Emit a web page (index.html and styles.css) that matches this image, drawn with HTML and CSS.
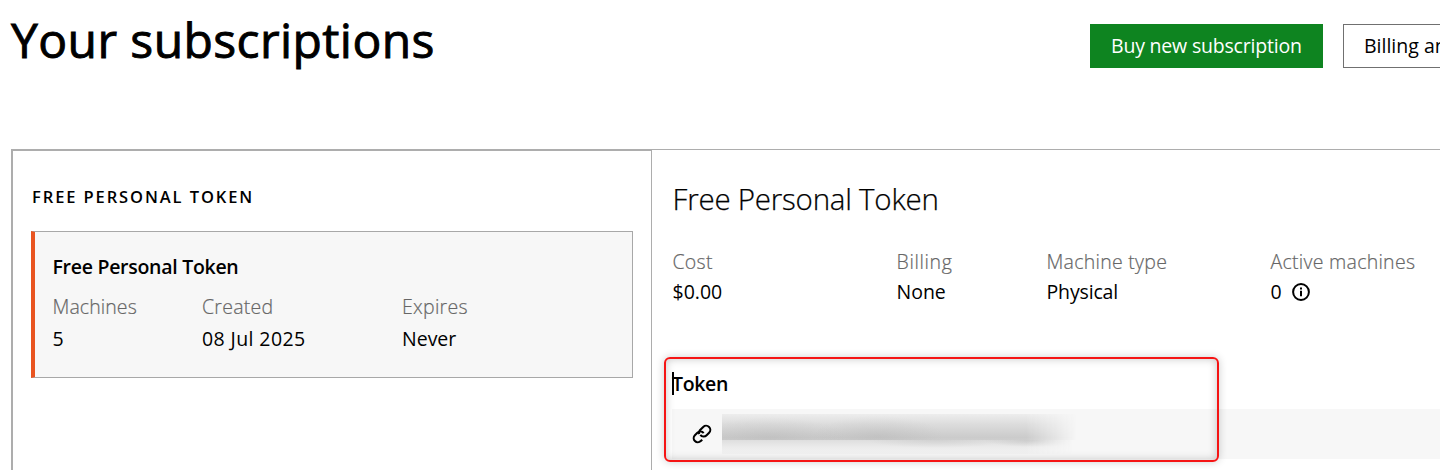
FILE: index.html
```html
<!DOCTYPE html>
<html lang="en">
<head>
<meta charset="utf-8">
<title>Your subscriptions</title>
<link rel="stylesheet" href="styles.css">
</head>
<body>
<header class="page-header">
  <h1 class="page-title">Your subscriptions</h1>
  <nav class="actions">
    <a class="button button-positive">Buy new subscription</a>
    <a class="button button-outline">Billing an</a>
  </nav>
</header>
<main class="panels">
  <section class="list-panel">
    <h2 class="group-title">FREE PERSONAL TOKEN</h2>
    <article class="card">
      <h3 class="card-title">Free Personal Token</h3>
      <dl class="card-stats">
        <div><dt>Machines</dt><dd>5</dd></div>
        <div><dt class="spaced">Created</dt><dd class="date">08 Jul 2025</dd></div>
        <div><dt class="spaced">Expires</dt><dd>Never</dd></div>
      </dl>
    </article>
  </section>
  <section class="detail-panel">
    <h2 class="detail-title">Free Personal Token</h2>
    <dl class="detail-stats">
      <div><dt class="spaced">Cost</dt><dd>$0.00</dd></div>
      <div><dt class="spaced-wide">Billing</dt><dd>None</dd></div>
      <div><dt class="spaced">Machine type</dt><dd class="tight">Physical</dd></div>
      <div><dt class="spaced">Active machines</dt><dd class="with-icon"><span>0</span>
        <svg class="info-icon" viewBox="0 0 18 18"><circle cx="9" cy="9" r="7.9" fill="none" stroke="#000" stroke-width="2"/><path d="M8 4.6h2v1.9H8zM8 7.7h2v5.6H8z"/></svg></dd></div>
    </dl>
    <div class="token">
      <h3 class="token-title">Token</h3>
      <div class="token-row">
        <svg class="link-icon" viewBox="0 0 24 24" fill="none" stroke="#000" stroke-width="2.5"><path d="M10 13a5 5 0 0 0 7.54.54l3-3a5 5 0 0 0-7.07-7.07l-4 4a4.6 4.6 0 0 0-.9 4.6"/><path d="M14 11a5 5 0 0 0-7.54-.54l-3 3a5 5 0 0 0 7.07 7.07l1.71-1.71"/></svg>
        <div class="redacted"><i class="smear"></i><i class="smear-tail"></i></div>
      </div>
      <div class="highlight"></div>
    </div>
  </section>
</main>
</body>
</html>
```
FILE: styles.css
```css
* { box-sizing: border-box; }
body { margin: 0; width: 1440px; height: 470px; overflow: hidden; background: #fff; color: #000; font: 400 19.5px/30px "Open Sans", "Noto Sans", sans-serif; }
h1, h2, h3, dl, dd { margin: 0; white-space: nowrap; }
dt, dd { white-space: nowrap; }
dt { color: #666; font-weight: 300; -webkit-text-stroke: .2px #666; letter-spacing: .08px; }
.spaced { letter-spacing: .27px; }
.spaced-wide { letter-spacing: .65px; }
.tight { letter-spacing: -.15px; }
.date { letter-spacing: .4px; }

.page-header { display: flex; justify-content: space-between; height: 149px; padding-left: 11px; overflow: hidden; }
.page-title { padding-top: 10px; font-size: 48px; line-height: 60px; font-weight: 400; letter-spacing: .42px; -webkit-text-stroke: .9px #000; }
.actions { display: flex; gap: 20px; width: 350px; flex: none; padding-top: 24px; }
.button { height: 44px; flex: none; padding-left: 21px; line-height: 44px; white-space: nowrap; letter-spacing: -.2px; }
.button-positive { width: 233px; background: #0e8420; color: #fff; }
.button-outline { width: 200px; padding-left: 20px; border: 1px solid #707070; line-height: 42px; letter-spacing: 0; }

.panels { display: flex; height: 321px; margin-left: 11px; border-top: 1px solid #adadad; border-left: 1px solid #adadad; }
.list-panel { width: 640px; flex: none; padding: 31px 18px 0; border: 1px solid #adadad; border-bottom: 0; }
.group-title { padding-left: 1px; font-size: 16.5px; font-weight: 600; line-height: 30px; letter-spacing: 1.9px; }
.card { height: 147px; margin-top: 19px; padding: 20px 0 0 17.5px; border: 1px solid #a8a8a8; border-left: 4px solid #e95420; background: #f7f7f7; }
.card-title { font-size: 19.5px; font-weight: 600; line-height: 30px; letter-spacing: -.28px; }
.card-stats { display: grid; grid-template-columns: 149.5px 200px 1fr; margin-top: 9px; line-height: 32px; }

.detail-panel { flex: 1; min-width: 0; padding: 30px 0 0 20px; }
.detail-title { padding-left: .6px; font-size: 29.5px; font-weight: 300; line-height: 38px; letter-spacing: -.23px; -webkit-text-stroke: .25px #000; }
.detail-stats { display: grid; grid-template-columns: 224px 150px 224px 1fr; margin-top: 29px; padding-left: .5px; }
.with-icon { display: flex; align-items: center; gap: 10px; }
.info-icon { width: 18px; height: 18px; margin-top: -1px; }
.token { position: relative; margin-top: 62px; }
.token-title { font-size: 19.5px; font-weight: 600; line-height: 30px; letter-spacing: -.35px; }
.token-title::before { content: ""; position: absolute; left: 0; top: 3px; width: 2px; height: 23px; background: #000; }
.token-row { display: flex; height: 50px; margin-top: 10px; padding: 5px 0 0 20px; background: #f7f7f7; }
.link-icon { width: 20px; height: 20px; margin-top: 10px; }
.redacted { width: 390px; height: 40px; margin-left: 10px; }
.smear, .smear-tail { display: block; width: 100%; }
.smear { height: 26px; background: radial-gradient(ellipse 75px 20px at 48px 23px, rgba(165,165,165,.25), transparent), radial-gradient(ellipse 65px 20px at 156px 22px, rgba(165,165,165,.25), transparent), linear-gradient(#ededed, #dcdcdc 40%, #cbcbcb 90%, #cecece); -webkit-mask-image: linear-gradient(90deg, #000 78%, transparent 91%); mask-image: linear-gradient(90deg, #000 78%, transparent 91%); }
.smear-tail { height: 14px; background: radial-gradient(ellipse 70px 8px at 215px 0, rgba(190,190,190,.4), transparent), radial-gradient(ellipse 50px 7px at 312px 0, rgba(180,180,180,.5), transparent), linear-gradient(#dedede, #ebebeb 50%, #f2f2f2); -webkit-mask-image: linear-gradient(90deg, #000 78%, transparent 90%); mask-image: linear-gradient(90deg, #000 78%, transparent 90%); }
.highlight { position: absolute; left: -8px; top: -12px; width: 555px; height: 105px; border: 2px solid #f51414; border-radius: 6px; box-shadow: 0 0 8px rgba(0,0,0,.2), inset 0 0 9px rgba(0,0,0,.22); }
```
